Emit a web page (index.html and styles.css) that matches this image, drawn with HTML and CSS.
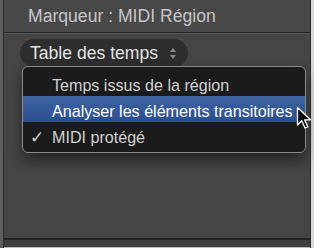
FILE: index.html
```html
<!DOCTYPE html>
<html>
<head>
<meta charset="utf-8">
<link rel="stylesheet" href="styles.css">
</head>
<body>
<div class="window">
  <div class="edge-left"></div>
  <div class="main">
    <div class="header">Marqueur : MIDI Région</div>
    <div class="content">
      <div class="popup">
        <span class="popup-label">Table des temps</span>
        <svg class="updown" width="8" height="13" viewBox="0 0 8 13"><path d="M4 1 L7 5 L1 5 Z M4 12 L7 8 L1 8 Z" fill="#8a8a8a"/></svg>
      </div>
      <div class="menu">
        <div class="item"><span class="check"></span>Temps issus de la région</div>
        <div class="item selected"><span class="check"></span>Analyser les éléments transitoires</div>
        <div class="item"><span class="check">✓</span>MIDI protégé</div>
      </div>
      <svg class="cursor" width="16" height="24" viewBox="0 0 16 24"><path d="M1.5 1.5 L1.5 19 L5.8 14.8 L9 22 L11.8 20.8 L8.6 13.8 L14.5 13.8 Z" fill="#000" stroke="#fff" stroke-width="1.3" stroke-linejoin="round"/></svg>
    </div>
    <div class="footer"></div>
  </div>
  <div class="edge-right"></div>
</div>
</body>
</html>
```
FILE: styles.css
```css
html, body {
  margin: 0;
  padding: 0;
}
body {
  width: 314px;
  height: 248px;
  overflow: hidden;
  background: #444;
  font-family: "Liberation Sans", Arial, sans-serif;
}
.window {
  display: flex;
  width: 314px;
  height: 248px;
}
.edge-left {
  width: 3px;
  background: #5e5e5e;
  border-right: 1px solid #2e2e2e;
}
.edge-right {
  width: 3px;
  background: #d8d8d8;
  border-left: 1px solid #2a2a2a;
}
.main {
  flex: 1;
  display: flex;
  flex-direction: column;
  background: #454545;
}
.header {
  height: 33px;
  box-sizing: border-box;
  padding: 6px 0 0 24px;
  font-size: 17.6px;
  color: #c6c6c6;
  background: #484848;
  border-bottom: 1px solid #262626;
  box-shadow: 0 1px 0 #555;
}
.content {
  flex: 1;
  position: relative;
  padding: 6px 0 0 16px;
}
.popup {
  display: inline-flex;
  align-items: center;
  height: 28px;
  padding: 0 11px 0 10px;
  gap: 11px;
  border-radius: 14px;
  background: #2d2d2d;
  color: #e2e2e2;
  font-size: 17.6px;
}
.menu {
  position: absolute;
  left: 18px;
  top: 33px;
  width: 284px;
  box-sizing: border-box;
  padding: 3px 0 4px;
  background: #1b1b1b;
  border: 1px solid #8a8a8a;
  border-radius: 6px;
  box-shadow: 0 8px 14px rgba(0,0,0,0.45);
}
.item {
  display: flex;
  align-items: center;
  height: 26px;
  box-sizing: border-box;
  padding-top: 4px;
  font-size: 16.1px;
  color: #d2d2d2;
}
.item.selected {
  background: linear-gradient(#3e64a4, #2b4e8e);
  color: #fff;
}
.check {
  width: 22px;
  padding-left: 7px;
  font-size: 17px;
}
.cursor {
  position: absolute;
  left: 292px;
  top: 73px;
}
.footer {
  height: 7px;
  background: #3f3f3f;
  border-top: 2px solid #222;
  border-bottom: 1px solid #bbb;
}
```
